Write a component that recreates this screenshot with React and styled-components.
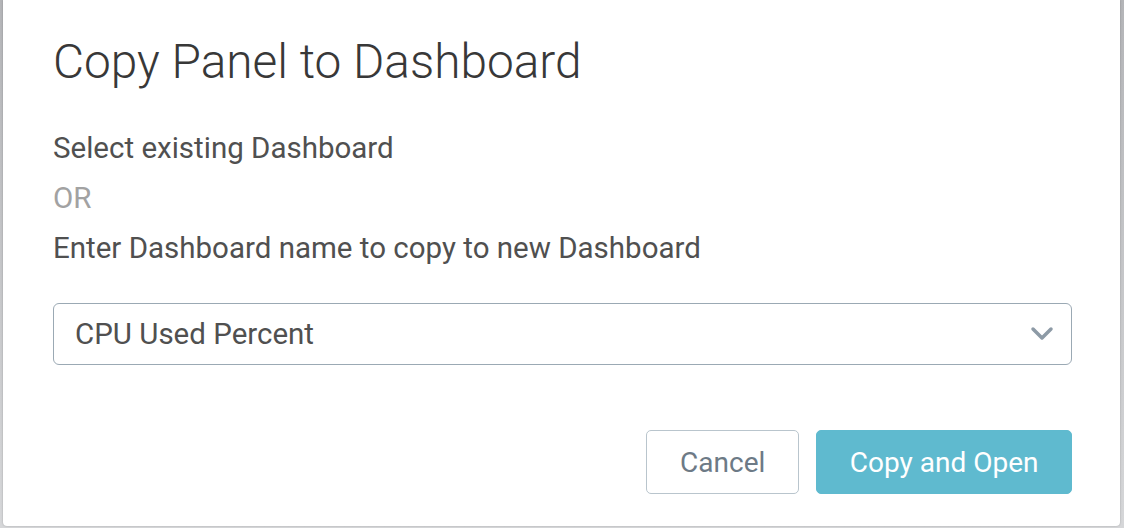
import React, { useState } from 'react';
import styled, { createGlobalStyle } from 'styled-components';

const GlobalStyle = createGlobalStyle`
  html, body {
    margin: 0;
    padding: 0;
    background: #b9babc;
    font-family: Roboto, "Helvetica Neue", Arial, sans-serif;
    overflow: hidden;
  }
  * {
    box-sizing: border-box;
  }
`;

const Backdrop = styled.div`
  width: 1124px;
  height: 528px;
  padding: 0 4px 2px 3px;
  background: linear-gradient(#b4b5b8, #d6d7d9);
`;

const Modal = styled.div`
  height: 526px;
  background: #fff;
  border-radius: 0 0 4px 4px;
  box-shadow: 0 0 2px rgba(0, 0, 0, 0.25);
  padding: 33px 48px 0 50px;
  display: flex;
  flex-direction: column;
`;

const Title = styled.h2`
  margin: 0;
  font-size: 47.8px;
  font-weight: 300;
  line-height: 58px;
  color: #383838;
`;

const Lines = styled.div`
  margin-top: 32px;
  display: flex;
  flex-direction: column;
`;

const Line = styled.p`
  margin: 0;
  font-size: 29.5px;
  font-weight: 400;
  line-height: 50px;
  color: ${(p) => (p.$muted ? '#a2a2a2' : '#505050')};
`;

const SelectBox = styled.div`
  margin-top: 30px;
  height: 62px;
  border: 1.5px solid #9ba9b4;
  border-radius: 6px;
  display: flex;
  align-items: center;
  justify-content: space-between;
  padding: 0 17px 0 21px;
  font-size: 29.5px;
  color: #505050;
  cursor: pointer;
`;

const Footer = styled.div`
  margin-top: 65px;
  display: flex;
  justify-content: flex-end;
  gap: 17px;
`;

const Button = styled.button`
  height: 64px;
  padding: 0 ${(p) => (p.$primary ? '32.5px' : '33px')};
  border-radius: 5px;
  font-family: inherit;
  font-size: 28px;
  cursor: pointer;
  border: 1.5px solid ${(p) => (p.$primary ? '#5fbacf' : '#b9c5cd')};
  background: ${(p) => (p.$primary ? '#5fbacf' : '#fff')};
  color: ${(p) => (p.$primary ? '#fff' : '#6d7a86')};
`;

const Chevron = () => (
  <svg width="24" height="16" viewBox="0 0 24 16">
    <path
      d="M3 3 L12 12 L21 3"
      fill="none"
      stroke="#8d9aa6"
      strokeWidth="3.5"
      strokeLinecap="round"
      strokeLinejoin="round"
    />
  </svg>
);

export default function App() {
  const [dashboard] = useState('CPU Used Percent');

  return (
    <>
      <GlobalStyle />
      <Backdrop>
        <Modal>
          <Title>Copy Panel to Dashboard</Title>
          <Lines>
            <Line>Select existing Dashboard</Line>
            <Line $muted>OR</Line>
            <Line>Enter Dashboard name to copy to new Dashboard</Line>
          </Lines>
          <SelectBox>
            <span>{dashboard}</span>
            <Chevron />
          </SelectBox>
          <Footer>
            <Button>Cancel</Button>
            <Button $primary>Copy and Open</Button>
          </Footer>
        </Modal>
      </Backdrop>
    </>
  );
}
